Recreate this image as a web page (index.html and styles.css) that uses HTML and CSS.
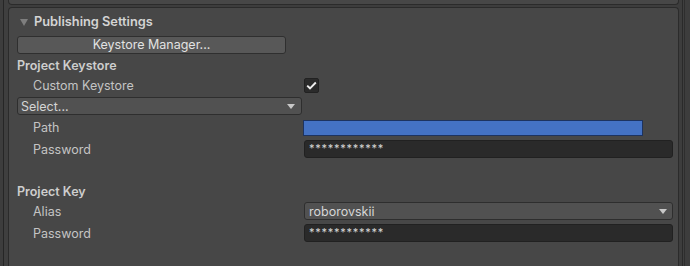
FILE: index.html
```html
<!DOCTYPE html>
<html>
<head>
<meta charset="utf-8">
<link rel="stylesheet" href="styles.css">
</head>
<body>
<div class="shell">
  <div class="gutter-left"></div>
  <div class="main">
    <div class="top-panel"></div>
    <div class="panel">
      <div class="header">
        <span class="foldout"></span>
        <span class="header-text">Publishing Settings</span>
      </div>
      <button class="btn">Keystore Manager...</button>
      <div class="section-label first">Project Keystore</div>
      <div class="row r-custom">
        <span class="label">Custom Keystore</span>
        <span class="checkbox">
          <svg width="11" height="9" viewBox="0 0 11 9"><path d="M1.2 4.6 L4 7.3 L9.8 1.5" fill="none" stroke="#f0f0f0" stroke-width="1.9"/></svg>
        </span>
      </div>
      <div class="select">
        <span>Select...</span>
        <span class="arrow"></span>
      </div>
      <div class="row r-path">
        <span class="label">Path</span>
        <span class="color-field"></span>
      </div>
      <div class="row r-pass">
        <span class="label">Password</span>
        <span class="text-field">************</span>
      </div>
      <div class="section-label second">Project Key</div>
      <div class="row r-alias">
        <span class="label">Alias</span>
        <span class="dropdown"><span>roborovskii</span><span class="arrow"></span></span>
      </div>
      <div class="row r-pass">
        <span class="label">Password</span>
        <span class="text-field">************</span>
      </div>
    </div>
  </div>
  <div class="gutter-right"></div>
</div>
</body>
</html>
```
FILE: styles.css
```css
* { box-sizing: border-box; }
html, body {
  margin: 0;
  padding: 0;
  background: #3d3d3d;
  width: 690px;
  height: 266px;
  overflow: hidden;
  font-family: Inter, "Noto Sans", sans-serif;
  font-size: 12px;
  color: #c4c4c4;
}
.shell {
  display: flex;
  height: 266px;
}
.gutter-left {
  width: 8px;
  margin-left: 3px;
  border-left: 1px solid #262626;
  background: #3f3f3f;
  flex: none;
  margin-right: -3px;
}
.main {
  width: 671px;
  flex: none;
  display: flex;
  flex-direction: column;
}
.top-panel {
  height: 5px;
  background: #474747;
  border: 1px solid #2b2b2b;
  border-top: none;
  border-radius: 0 0 4px 4px;
  flex: none;
}
.panel {
  margin-top: 2px;
  flex: 1;
  background: #474747;
  border: 1px solid #2b2b2b;
  border-bottom: none;
  border-radius: 4px 4px 0 0;
  padding: 4px 5px 0 8px;
  display: flex;
  flex-direction: column;
}
.gutter-right {
  flex: 1;
  margin-left: 3px;
  border-left: 1px solid #2a2a2a;
  border-right: 1px solid #2e2e2e;
  background: #3f3f3f;
  margin-right: 5px;
}
.header {
  height: 18px;
  display: flex;
  align-items: center;
}
.foldout {
  width: 0;
  height: 0;
  border-left: 4px solid transparent;
  border-right: 4px solid transparent;
  border-top: 7px solid #7e7e7e;
  margin-left: 3px;
  margin-right: 6px;
  margin-top: 2px;
}
.header-text {
  font-weight: 600;
  font-size: 12.8px;
  color: #d4d4d4;
}
.btn {
  margin-top: 6px;
  width: 269px;
  height: 18px;
  background: #585858;
  border: 1px solid #2f2f2f;
  border-radius: 3px;
  color: #e2e2e2;
  font-family: inherit;
  font-size: 12.5px;
  padding: 0;
  line-height: 16px;
}
.section-label {
  height: 18px;
  line-height: 18px;
  font-weight: 600;
  font-size: 12.5px;
  color: #cecece;
}
.section-label.first { margin-top: 3px; }
.section-label.second { margin-top: 25px; }
.row {
  height: 18px;
  display: flex;
  align-items: center;
}
.label {
  width: 287px;
  padding-left: 16px;
  flex: none;
  font-size: 12.5px;
  color: #c4c4c4;
}
.r-custom { margin-top: 1px; }
.checkbox {
  width: 15px;
  height: 15px;
  background: #2b2b2b;
  border: 1px solid #222;
  border-radius: 2px;
  display: flex;
  align-items: center;
  justify-content: center;
}
.select {
  margin-top: 3px;
  width: 285px;
  height: 18px;
  background: #515151;
  border: 1px solid #2e2e2e;
  border-radius: 3px;
  display: flex;
  align-items: center;
  justify-content: space-between;
  padding: 0 6px 0 3px;
  font-size: 12.5px;
  color: #d4d4d4;
}
.arrow {
  width: 0;
  height: 0;
  border-left: 4px solid transparent;
  border-right: 4px solid transparent;
  border-top: 5px solid #c8c8c8;
}
.r-path { margin-top: 3px; }
.color-field {
  margin-left: -1px;
  width: 340px;
  height: 16px;
  margin-top: 1px;
  background: #4472c4;
  border: 1px solid #1d3360;
}
.r-pass { margin-top: 4px; }
.text-field {
  flex: 1;
  height: 18px;
  background: #2a2a2a;
  border: 1px solid #212121;
  border-radius: 3px;
  padding-left: 4px;
  font-size: 11px;
  line-height: 14px;
  color: #d6d6d6;
  letter-spacing: 0.75px;
}
.r-alias { margin-top: 1px; }
.dropdown {
  flex: 1;
  height: 18px;
  background: #515151;
  border: 1px solid #2e2e2e;
  border-radius: 3px;
  display: flex;
  align-items: center;
  justify-content: space-between;
  padding: 0 5px 0 4px;
  font-size: 12.5px;
  color: #d6d6d6;
}
```
